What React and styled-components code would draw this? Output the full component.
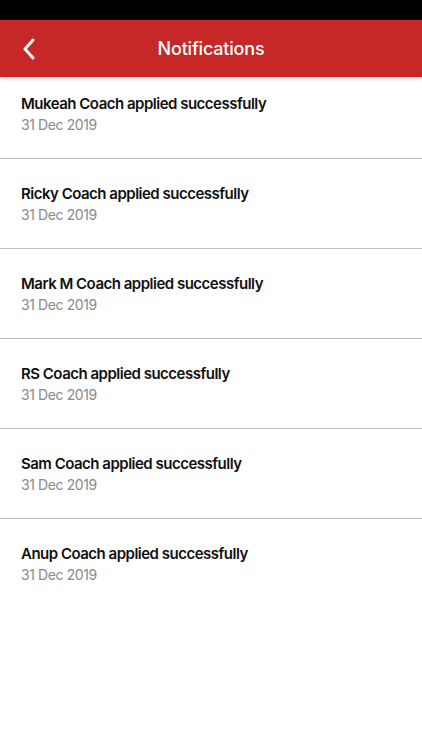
import styled, { createGlobalStyle } from "styled-components";

const GlobalStyle = createGlobalStyle`
  html, body {
    margin: 0;
    padding: 0;
    background: #ffffff;
  }
  body {
    font-family: Inter, "Liberation Sans", Arial, sans-serif;
  }
`;

const Screen = styled.div`
  width: 100%;
  min-height: 750px;
  display: flex;
  flex-direction: column;
  background: #ffffff;
`;

const StatusBar = styled.div`
  height: 20px;
  background: #000000;
`;

const Header = styled.header`
  position: relative;
  height: 57px;
  background: #c62828;
  display: flex;
  align-items: center;
  justify-content: center;
  box-shadow: 0 2px 4px rgba(0, 0, 0, 0.18);
  z-index: 1;
`;

const BackButton = styled.button`
  position: absolute;
  left: 18px;
  top: 50%;
  transform: translateY(-50%);
  background: none;
  border: none;
  padding: 4px;
  display: flex;
  align-items: center;
  cursor: pointer;
`;

const Title = styled.h1`
  margin: 0;
  color: #ffffff;
  font-size: 18px;
  font-weight: 500;
  letter-spacing: -0.2px;
`;

const List = styled.ul`
  list-style: none;
  margin: 0;
  padding: 0;
`;

const Item = styled.li`
  padding: 26px 21px 24px;
  border-bottom: 1px solid #bdbdbd;
  display: flex;
  flex-direction: column;
  gap: 3px;

  &:first-child {
    padding-top: 18px;
  }

  &:last-child {
    border-bottom: none;
  }
`;

const ItemTitle = styled.div`
  font-size: 15px;
  font-weight: 600;
  color: #111111;
  line-height: 18px;
  letter-spacing: -0.5px;
`;

const ItemDate = styled.div`
  font-size: 14px;
  color: #8a8a8a;
  line-height: 18px;
  letter-spacing: -0.4px;
`;

const notifications = [
  "Mukeah Coach applied successfully",
  "Ricky Coach applied successfully",
  "Mark M Coach applied successfully",
  "RS Coach applied successfully",
  "Sam Coach applied successfully",
  "Anup Coach applied successfully",
];

export default function App() {
  return (
    <>
      <GlobalStyle />
      <Screen>
        <StatusBar />
        <Header>
          <BackButton aria-label="Back">
            <svg width="14" height="22" viewBox="0 0 14 22" fill="none">
              <path
                d="M11 2 L3 11 L11 20"
                stroke="#ffffff"
                strokeWidth="3"
                strokeLinecap="round"
                strokeLinejoin="round"
              />
            </svg>
          </BackButton>
          <Title>Notifications</Title>
        </Header>
        <List>
          {notifications.map((text) => (
            <Item key={text}>
              <ItemTitle>{text}</ItemTitle>
              <ItemDate>31 Dec 2019</ItemDate>
            </Item>
          ))}
        </List>
      </Screen>
    </>
  );
}
